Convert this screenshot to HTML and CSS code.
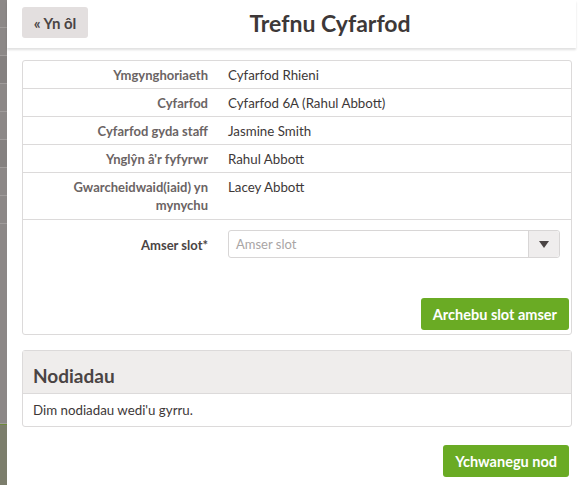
FILE: index.html
```html
<!DOCTYPE html>
<html>
<head>
<meta charset="utf-8">
<link rel="stylesheet" href="styles.css">
</head>
<body>
<div class="page">
  <div class="backdrop">
    <div class="bd-row"></div><div class="bd-row"></div><div class="bd-row dark"></div><div class="bd-row"></div>
    <div class="bd-row"></div><div class="bd-row dark"></div><div class="bd-row"></div><div class="bd-row"></div>
    <div class="bd-row tall"></div><div class="bd-green"></div>
  </div>
  <div class="modal">
    <header class="header">
      <button class="back">« Yn ôl</button>
      <h1 class="title">Trefnu Cyfarfod</h1>
    </header>
    <div class="content">
      <div class="box">
        <div class="row"><div class="lbl">Ymgynghoriaeth</div><div class="val">Cyfarfod Rhieni</div></div>
        <div class="row"><div class="lbl">Cyfarfod</div><div class="val">Cyfarfod 6A (Rahul Abbott)</div></div>
        <div class="row"><div class="lbl">Cyfarfod gyda staff</div><div class="val">Jasmine Smith</div></div>
        <div class="row"><div class="lbl">Ynglŷn â'r fyfyrwr</div><div class="val">Rahul Abbott</div></div>
        <div class="row multi"><div class="lbl">Gwarcheidwaid(iaid) yn mynychu</div><div class="val">Lacey Abbott</div></div>
        <div class="form">
          <div class="form-row">
            <div class="lbl strong">Amser slot*</div>
            <div class="select"><span class="ph">Amser slot</span><span class="arrow"><svg width="10" height="7" viewBox="0 0 10 7"><path d="M0 0h10L5 7z" fill="#4a4444"/></svg></span></div>
          </div>
          <div class="actions"><button class="btn">Archebu slot amser</button></div>
        </div>
      </div>
      <div class="notes">
        <div class="notes-head">Nodiadau</div>
        <div class="notes-body">Dim nodiadau wedi'u gyrru.</div>
      </div>
      <div class="actions bottom"><button class="btn">Ychwanegu nod</button></div>
    </div>
  </div>
</div>
</body>
</html>
```
FILE: styles.css
```css
* { box-sizing: border-box; }
html, body { margin: 0; padding: 0; }
body { font-family: "Lato", "Open Sans", sans-serif; color: #3d3838; background: #fff; }
.page { display: flex; width: 580px; height: 485px; overflow: hidden; }
.backdrop { width: 7px; flex: none; background: #8c8887; display: flex; flex-direction: column; }
.bd-row { height: 28px; border-bottom: 1px solid #a09c9b; }
.bd-row.dark { background: #858180; }
.bd-row.tall { height: 200px; }
.bd-green { flex: 1; background: #7c7e6c; border-top: 1px solid #6e8a3a; }
.modal { flex: 1; display: flex; flex-direction: column; background: #fff; }
.header { height: 48px; display: flex; align-items: center; padding: 0 0 0 15px; box-shadow: 0 2px 2px rgba(0,0,0,0.12); margin-right: 4px; }
.back { font-family: inherit; font-weight: 700; font-size: 15px; color: #4a4444; background: #e3dfdf; border: none; border-radius: 3px; height: 31px; width: 66px; padding: 0; margin-top: -3px; }
.title { flex: 1; margin: -3px 0 0 0; text-align: center; font-size: 23px; font-weight: 700; color: #3d3838; padding-right: 4px; }
.content { padding: 12px 8px 0 15px; }
.box { border: 1px solid #dcdada; border-radius: 3px; }
.row { display: flex; border-bottom: 1px solid #dcdada; }
.lbl { width: 185px; flex: none; text-align: right; font-weight: 700; font-size: 13px; color: #6b6464; padding: 5px 0 4px; line-height: 18px; }
.row.multi .lbl { padding-bottom: 5px; }
.lbl.strong { color: #4a4444; }
.val { padding: 5px 0 4px 20px; font-size: 13.3px; line-height: 18px; color: #3d3838; }
.form { padding: 10px 2px 4px 0; }
.form-row { display: flex; align-items: center; }
.select { margin-left: 20px; flex: 1; height: 28px; border: 1px solid #d8d6d6; border-radius: 3px; display: flex; align-items: center; justify-content: space-between; margin-right: 9px; }
.ph { color: #a9a5a5; font-size: 13px; padding-left: 7px; }
.arrow { width: 31px; height: 26px; background: #efeded; border-left: 1px solid #d8d6d6; display: flex; align-items: center; justify-content: center; border-radius: 0 3px 3px 0; }
.actions { display: flex; justify-content: flex-end; margin-top: 40px; }
.btn { font-family: inherit; font-weight: 700; font-size: 14.5px; color: #fff; background: #6aab24; border: none; border-radius: 3px; height: 32px; padding: 0 12px; }
.notes { margin-top: 15px; border: 1px solid #dcdada; border-radius: 3px; }
.notes-head { background: #efedec; height: 43px; border-bottom: 1px solid #dcdada; font-size: 19px; font-weight: 700; color: #4a4444; padding: 14px 10px 0; line-height: 22px; }
.notes-body { font-size: 13.3px; color: #3d3838; padding: 7px 10px; line-height: 18px; }
.actions.bottom { margin-top: 18px; padding-right: 3px; }
```
